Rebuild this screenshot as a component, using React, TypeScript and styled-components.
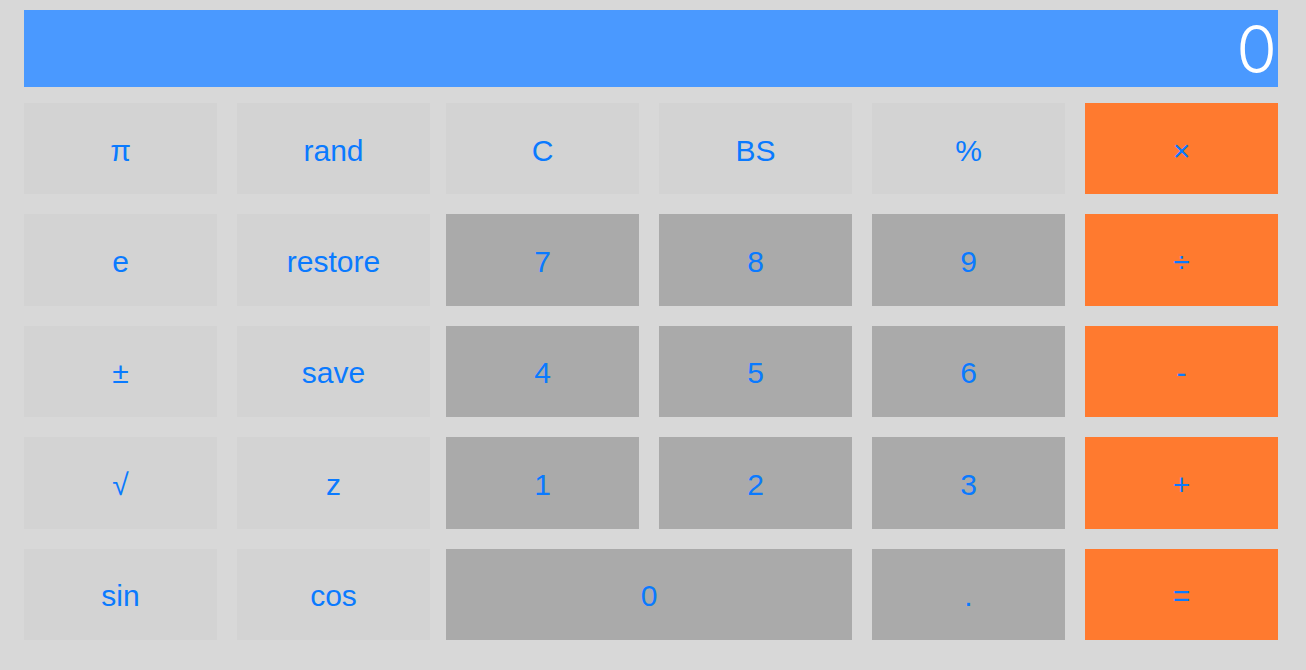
import React, { useState } from 'react'
import styled, { createGlobalStyle } from 'styled-components'

const GlobalStyle = createGlobalStyle`
html, body {
  margin: 0;
  padding: 0;
  background: #d8d8d8;
}
`

type Kind = 'fn' | 'num' | 'op'

type Key = {
  label: string
  kind: Kind
  wide?: boolean
}

const leftKeys: Key[] = [
  { label: 'π', kind: 'fn' },
  { label: 'rand', kind: 'fn' },
  { label: 'e', kind: 'fn' },
  { label: 'restore', kind: 'fn' },
  { label: '±', kind: 'fn' },
  { label: 'save', kind: 'fn' },
  { label: '√', kind: 'fn' },
  { label: 'z', kind: 'fn' },
  { label: 'sin', kind: 'fn' },
  { label: 'cos', kind: 'fn' },
]

const rightKeys: Key[] = [
  { label: 'C', kind: 'fn' },
  { label: 'BS', kind: 'fn' },
  { label: '%', kind: 'fn' },
  { label: '×', kind: 'op' },
  { label: '7', kind: 'num' },
  { label: '8', kind: 'num' },
  { label: '9', kind: 'num' },
  { label: '÷', kind: 'op' },
  { label: '4', kind: 'num' },
  { label: '5', kind: 'num' },
  { label: '6', kind: 'num' },
  { label: '-', kind: 'op' },
  { label: '1', kind: 'num' },
  { label: '2', kind: 'num' },
  { label: '3', kind: 'num' },
  { label: '+', kind: 'op' },
  { label: '0', kind: 'num', wide: true },
  { label: '.', kind: 'num' },
  { label: '=', kind: 'op' },
]

const App: React.FC = () => {
  const [value] = useState('0')

  return (
    <Page>
      <GlobalStyle />
      <Display>{value}</Display>
      <Pad>
        <LeftGrid>
          {leftKeys.map((k) => (
            <Button key={k.label} kind={k.kind}>{k.label}</Button>
          ))}
        </LeftGrid>
        <RightGrid>
          {rightKeys.map((k) => (
            <Button key={k.label} kind={k.kind} $wide={k.wide}>{k.label}</Button>
          ))}
        </RightGrid>
      </Pad>
    </Page>
  )
}

export default App

const Page = styled.div`
width: 1306px;
height: 670px;
box-sizing: border-box;
padding: 10px 28px 30px 24px;
display: flex;
flex-direction: column;
gap: 16px;
background: #d8d8d8;
font-family: "Liberation Sans", Arial, sans-serif;
`

const Display = styled.div`
height: 77px;
background: #4a99ff;
color: #ffffff;
font-family: Inter, "Liberation Sans", sans-serif;
font-weight: 300;
font-size: 66px;
line-height: 79px;
text-align: right;
padding-right: 1px;
`

const Pad = styled.div`
flex: 1;
display: flex;
gap: 16px;
`

const LeftGrid = styled.div`
width: 406px;
display: grid;
grid-template-columns: repeat(2, 1fr);
grid-template-rows: repeat(5, 1fr);
gap: 20px;
`

const RightGrid = styled.div`
flex: 1;
display: grid;
grid-template-columns: repeat(4, 1fr);
grid-template-rows: repeat(5, 1fr);
gap: 20px;
`

const colors: Record<Kind, string> = {
  fn: '#d3d3d3',
  num: '#aaaaaa',
  op: '#ff7a2f',
}

const Button = styled.button<{ kind: Kind; $wide?: boolean }>`
grid-column: ${(p) => (p.$wide ? 'span 2' : 'auto')};
border: none;
margin: 0;
padding: 4px 0 0;
background: ${(p) => colors[p.kind]};
color: #0a7aff;
font-family: "Liberation Sans", Arial, sans-serif;
font-size: 30px;
display: flex;
align-items: center;
justify-content: center;
cursor: pointer;
`
